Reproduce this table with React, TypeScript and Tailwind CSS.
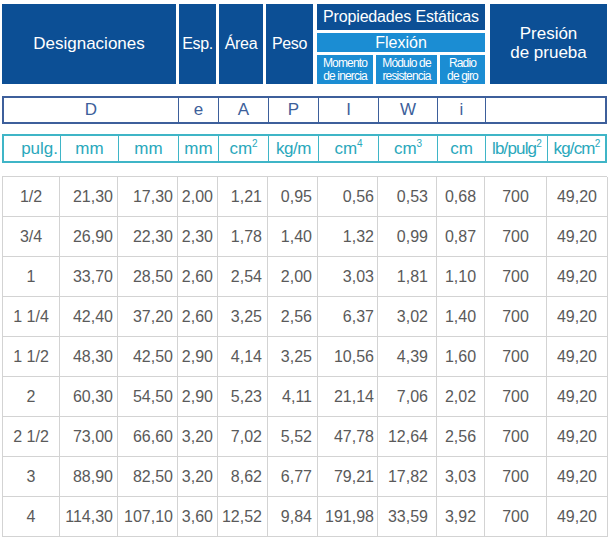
import React from "react";

const rows: string[][] = [
  ["1/2", "21,30", "17,30", "2,00", "1,21", "0,95", "0,56", "0,53", "0,68", "700", "49,20"],
  ["3/4", "26,90", "22,30", "2,30", "1,78", "1,40", "1,32", "0,99", "0,87", "700", "49,20"],
  ["1", "33,70", "28,50", "2,60", "2,54", "2,00", "3,03", "1,81", "1,10", "700", "49,20"],
  ["1 1/4", "42,40", "37,20", "2,60", "3,25", "2,56", "6,37", "3,02", "1,40", "700", "49,20"],
  ["1 1/2", "48,30", "42,50", "2,90", "4,14", "3,25", "10,56", "4,39", "1,60", "700", "49,20"],
  ["2", "60,30", "54,50", "2,90", "5,23", "4,11", "21,14", "7,06", "2,02", "700", "49,20"],
  ["2 1/2", "73,00", "66,60", "3,20", "7,02", "5,52", "47,78", "12,64", "2,56", "700", "49,20"],
  ["3", "88,90", "82,50", "3,20", "8,62", "6,77", "79,21", "17,82", "3,03", "700", "49,20"],
  ["4", "114,30", "107,10", "3,60", "12,52", "9,84", "191,98", "33,59", "3,92", "700", "49,20"],
];

const cellAlign = [
  "justify-center",
  "justify-end pr-[4px]",
  "justify-end pr-[4px]",
  "justify-end pr-[4px]",
  "justify-end pr-[5px]",
  "justify-end pr-[5px]",
  "justify-end pr-[3px]",
  "justify-end pr-[8px]",
  "justify-center",
  "justify-center",
  "justify-center",
];

export default function App() {
  return (
    <div
      className="w-[612px] h-[540px] bg-white pl-[2px] pt-[4px] overflow-hidden"
      style={{ fontFamily: '"Liberation Sans", Arial, Helvetica, sans-serif' }}
    >
      {/* Header */}
      <div className="flex h-[80px] text-white">
        <div className="w-[174px] bg-[#0c4f95] flex items-center justify-center text-[17px]">
          Designaciones
        </div>
        <div className="ml-[3px] w-[37px] bg-[#0c4f95] flex items-center justify-center text-[16px] tracking-[-0.02em]">
          Esp.
        </div>
        <div className="ml-[3px] w-[44px] bg-[#0c4f95] flex items-center justify-center text-[16px] tracking-[-0.02em]">
          Área
        </div>
        <div className="ml-[3px] w-[47px] bg-[#0c4f95] flex items-center justify-center text-[16px] tracking-[-0.02em]">
          Peso
        </div>
        <div className="ml-[4px] w-[168px] flex flex-col">
          <div className="h-[26px] bg-[#0c4f95] flex items-center justify-center text-[16px] tracking-[-0.01em]">
            Propiedades Estáticas
          </div>
          <div className="mt-[3px] h-[19px] bg-[#1b8dd3] flex items-center justify-center text-[16px]">
            Flexión
          </div>
          <div className="mt-[3px] h-[29px] flex text-[12px] leading-[13px] tracking-[-0.07em] text-center">
            <div className="w-[56px] bg-[#1b8dd3] flex flex-col items-center justify-center">
              <span>Momento</span>
              <span>de inercia</span>
            </div>
            <div className="ml-[3px] w-[61px] bg-[#1b8dd3] flex flex-col items-center justify-center">
              <span>Módulo de</span>
              <span>resistencia</span>
            </div>
            <div className="ml-[3px] w-[45px] bg-[#1b8dd3] flex flex-col items-center justify-center">
              <span>Radio</span>
              <span>de giro</span>
            </div>
          </div>
        </div>
        <div className="ml-[5px] w-[117px] bg-[#0c4f95] flex flex-col items-center justify-center text-[17px] leading-[19px] pb-[2px]">
          <span>Presión</span>
          <span>de prueba</span>
        </div>
      </div>

      {/* Symbols row */}
      <div className="mt-[12px] w-[605px] h-[28px] border-2 border-[#3d5f9b] flex text-[17px] text-[#3d5f9b]">
        <div className="w-[174px] flex items-center justify-center">D</div>
        <div className="w-[40px] border-l border-[#3d5f9b] flex items-center justify-center">e</div>
        <div className="w-[50px] border-l border-[#3d5f9b] flex items-center justify-center">A</div>
        <div className="w-[50px] border-l border-[#3d5f9b] flex items-center justify-center">P</div>
        <div className="w-[60px] border-l border-[#3d5f9b] flex items-center justify-center">I</div>
        <div className="w-[59px] border-l border-[#3d5f9b] flex items-center justify-center">W</div>
        <div className="w-[48px] border-l border-[#3d5f9b] flex items-center justify-center">i</div>
        <div className="flex-1 border-l border-[#3d5f9b]"></div>
      </div>

      {/* Units row */}
      <div className="mt-[10px] w-[605px] h-[29px] border-2 border-[#3fb5c7] flex text-[17px] text-[#2aa8bc]">
        <div className="w-[56px] flex items-center justify-end pr-[2px]">pulg.</div>
        <div className="w-[58px] border-l border-[#3fb5c7] flex items-center justify-center">mm</div>
        <div className="w-[60px] border-l border-[#3fb5c7] flex items-center justify-center">mm</div>
        <div className="w-[40px] border-l border-[#3fb5c7] flex items-center justify-center">mm</div>
        <div className="w-[50px] border-l border-[#3fb5c7] flex items-center justify-center">
          cm<sup className="text-[10px]">2</sup>
        </div>
        <div className="w-[50px] border-l border-[#3fb5c7] flex items-center justify-center tracking-[-0.03em]">
          kg/m
        </div>
        <div className="w-[60px] border-l border-[#3fb5c7] flex items-center justify-center">
          cm<sup className="text-[10px]">4</sup>
        </div>
        <div className="w-[59px] border-l border-[#3fb5c7] flex items-center justify-center">
          cm<sup className="text-[10px]">3</sup>
        </div>
        <div className="w-[48px] border-l border-[#3fb5c7] flex items-center justify-center">cm</div>
        <div className="w-[62px] border-l border-[#3fb5c7] flex items-center justify-center tracking-[-0.05em]">
          lb/pulg<sup className="text-[10px]">2</sup>
        </div>
        <div className="flex-1 border-l border-[#3fb5c7] flex items-center justify-center tracking-[-0.05em]">
          kg/cm<sup className="text-[10px]">2</sup>
        </div>
      </div>

      {/* Data table */}
      <div className="mt-[13px] w-[605px] grid grid-cols-[57px_58px_60px_40px_50px_50px_60px_59px_48px_62px_61px] border-l border-t border-[#d3d3d3] text-[16px] text-[#5a5a5a]">
        {rows.map((r, ri) =>
          r.map((v, ci) => (
            <div
              key={`${ri}-${ci}`}
              className={`h-[40px] border-r border-b border-[#d3d3d3] flex items-center ${cellAlign[ci]}`}
            >
              {v}
            </div>
          ))
        )}
      </div>
    </div>
  );
}
